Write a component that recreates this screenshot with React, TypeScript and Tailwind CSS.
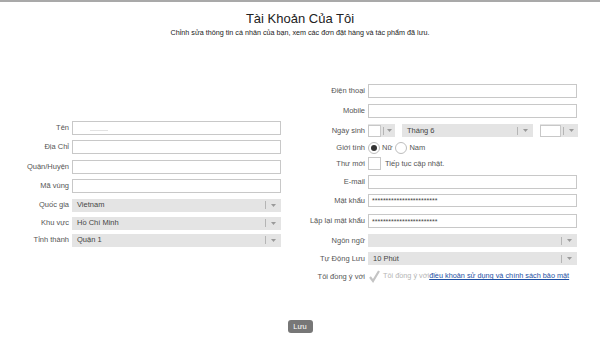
import React from "react";

const font = { fontFamily: '"Liberation Sans", Arial, sans-serif' };

const TextInput = ({ value, h = "h-[14px]" }: { value?: React.ReactNode; h?: string }) => (
  <div className={`w-[209px] ${h} border border-[#c8c8c8] bg-white flex items-center px-[3px] text-[7px] leading-none text-[#444]`}>
    {value}
  </div>
);

const Arrow = () => (
  <svg width="5" height="3" viewBox="0 0 5 3" className="shrink-0">
    <path d="M0 0 L5 0 L2.5 3 Z" fill="#9a9a9a" />
  </svg>
);

const Select = ({ value, w = "w-[209px]" }: { value?: string; w?: string }) => (
  <div className={`${w} h-[13px] bg-[#e4e4e4] flex items-center text-[7.5px] text-[#444]`}>
    <span className="flex-1 pl-[5px] truncate">{value}</span>
    <span className="w-px h-[8px] bg-[#b5b5b5]" />
    <span className="w-[15px] flex justify-center"><Arrow /></span>
  </div>
);

const Label = ({ children, w }: { children: React.ReactNode; w: string }) => (
  <div className={`${w} pr-[3px] text-right text-[7.5px] text-[#555] shrink-0 whitespace-nowrap`}>{children}</div>
);

const Row = ({ label, w, children, mb }: { label: string; w: string; children: React.ReactNode; mb: string }) => (
  <div className={`flex items-center ${mb}`}>
    <Label w={w}>{label}</Label>
    {children}
  </div>
);

const Radio = ({ checked }: { checked?: boolean }) => (
  <span className="w-[12px] h-[12px] rounded-full border border-[#bdbdbd] bg-white flex items-center justify-center shrink-0">
    {checked && <span className="w-[6px] h-[6px] rounded-full bg-[#333]" />}
  </span>
);

const stars = "************************";

export default function App() {
  const lw = "w-[72px]";
  const rw = "w-[68px]";
  return (
    <div className="w-[600px] h-[352px] bg-white border-t-2 border-[#a9a9a9] flex flex-col" style={font}>
      <div className="flex flex-col items-center pt-[9px]">
        <h1 className="text-[13px] leading-[16px] text-[#222]">Tài Khoản Của Tôi</h1>
        <p className="text-[7.2px] leading-[10px] text-[#222] mt-[1px]">
          Chỉnh sửa thông tin cá nhân của bạn, xem các đơn đặt hàng và tác phẩm đã lưu.
        </p>
      </div>

      <div className="flex items-center mt-[46px]">
        <div className="w-[300px] flex flex-col">
          <Row label="Tên" w={lw} mb="mb-[5px]">
            <TextInput value={<span className="ml-[14px] mt-[6px] w-[18px] h-px bg-[#e2e2e2]" />} />
          </Row>
          <Row label="Địa Chỉ" w={lw} mb="mb-[6px]"><TextInput /></Row>
          <Row label="Quận/Huyện" w={lw} mb="mb-[5px]"><TextInput /></Row>
          <Row label="Mã vùng" w={lw} mb="mb-[6px]"><TextInput /></Row>
          <Row label="Quốc gia" w={lw} mb="mb-[5px]"><Select value="Vietnam" /></Row>
          <Row label="Khu vực" w={lw} mb="mb-[4px]"><Select value="Hồ Chí Minh" /></Row>
          <Row label="Tỉnh thành" w={lw} mb="mb-0"><Select value="Quận 1" /></Row>
        </div>

        <div className="w-[300px] flex flex-col">
          <Row label="Điện thoại" w={rw} mb="mb-[6px]"><TextInput /></Row>
          <Row label="Mobile" w={rw} mb="mb-[6px]"><TextInput /></Row>
          <Row label="Ngày sinh" w={rw} mb="mb-[5px]">
            <div className="flex items-center gap-[7px]">
              <div className="w-[27px] h-[13px] bg-[#e4e4e4] flex items-center">
                <span className="w-[13px] h-[12px] bg-white border border-[#c8c8c8]" />
                <span className="w-px h-[8px] bg-[#b5b5b5] ml-[2px]" />
                <span className="flex-1 flex justify-center"><Arrow /></span>
              </div>
              <Select value="Tháng 6" w="w-[131px]" />
              <div className="w-[38px] h-[13px] bg-[#e4e4e4] flex items-center">
                <span className="w-[21px] h-[12px] bg-white border border-[#c8c8c8]" />
                <span className="w-px h-[8px] bg-[#b5b5b5] ml-[2px]" />
                <span className="flex-1 flex justify-center"><Arrow /></span>
              </div>
            </div>
          </Row>
          <Row label="Giới tính" w={rw} mb="mb-[3px]">
            <div className="flex items-center text-[7.5px] text-[#555]">
              <Radio checked />
              <span className="ml-[2px] mr-[3px]">Nữ</span>
              <Radio />
              <span className="ml-[2px]">Nam</span>
            </div>
          </Row>
          <Row label="Thư mới" w={rw} mb="mb-[5px]">
            <div className="flex items-center text-[7.5px] text-[#555]">
              <span className="w-[13px] h-[13px] border border-[#c8c8c8] bg-white" />
              <span className="ml-[4px]">Tiếp tục cập nhật.</span>
            </div>
          </Row>
          <Row label="E-mail" w={rw} mb="mb-[5px]"><TextInput /></Row>
          <Row label="Mật khẩu" w={rw} mb="mb-[7px]"><TextInput value={stars} h="h-[13px]" /></Row>
          <Row label="Lặp lại mật khẩu" w={rw} mb="mb-[6px]"><TextInput value={stars} /></Row>
          <Row label="Ngôn ngữ" w={rw} mb="mb-[5px]"><Select /></Row>
          <Row label="Tự Động Lưu" w={rw} mb="mb-[5px]"><Select value="10 Phút" /></Row>
          <Row label="Tôi đồng ý với" w={rw} mb="mb-0">
            <div className="flex items-center text-[7.3px]">
              <svg width="13" height="13" viewBox="0 0 13 13" className="shrink-0">
                <path d="M2 7 L5 11 L11 1" stroke="#c4c4c4" strokeWidth="2.2" fill="none" />
              </svg>
              <span className="ml-[2px] text-[#b5b5b5]">Tôi đồng ý với</span>
              <a className="text-[#1d4fa3] underline">điều khoản sử dụng và chính sách bảo mật</a>
            </div>
          </Row>
        </div>
      </div>

      <div className="flex justify-center mt-[37px]">
        <button className="w-[25px] h-[13px] rounded-[3px] bg-[#777] text-white text-[7.5px] leading-none">Lưu</button>
      </div>
    </div>
  );
}
